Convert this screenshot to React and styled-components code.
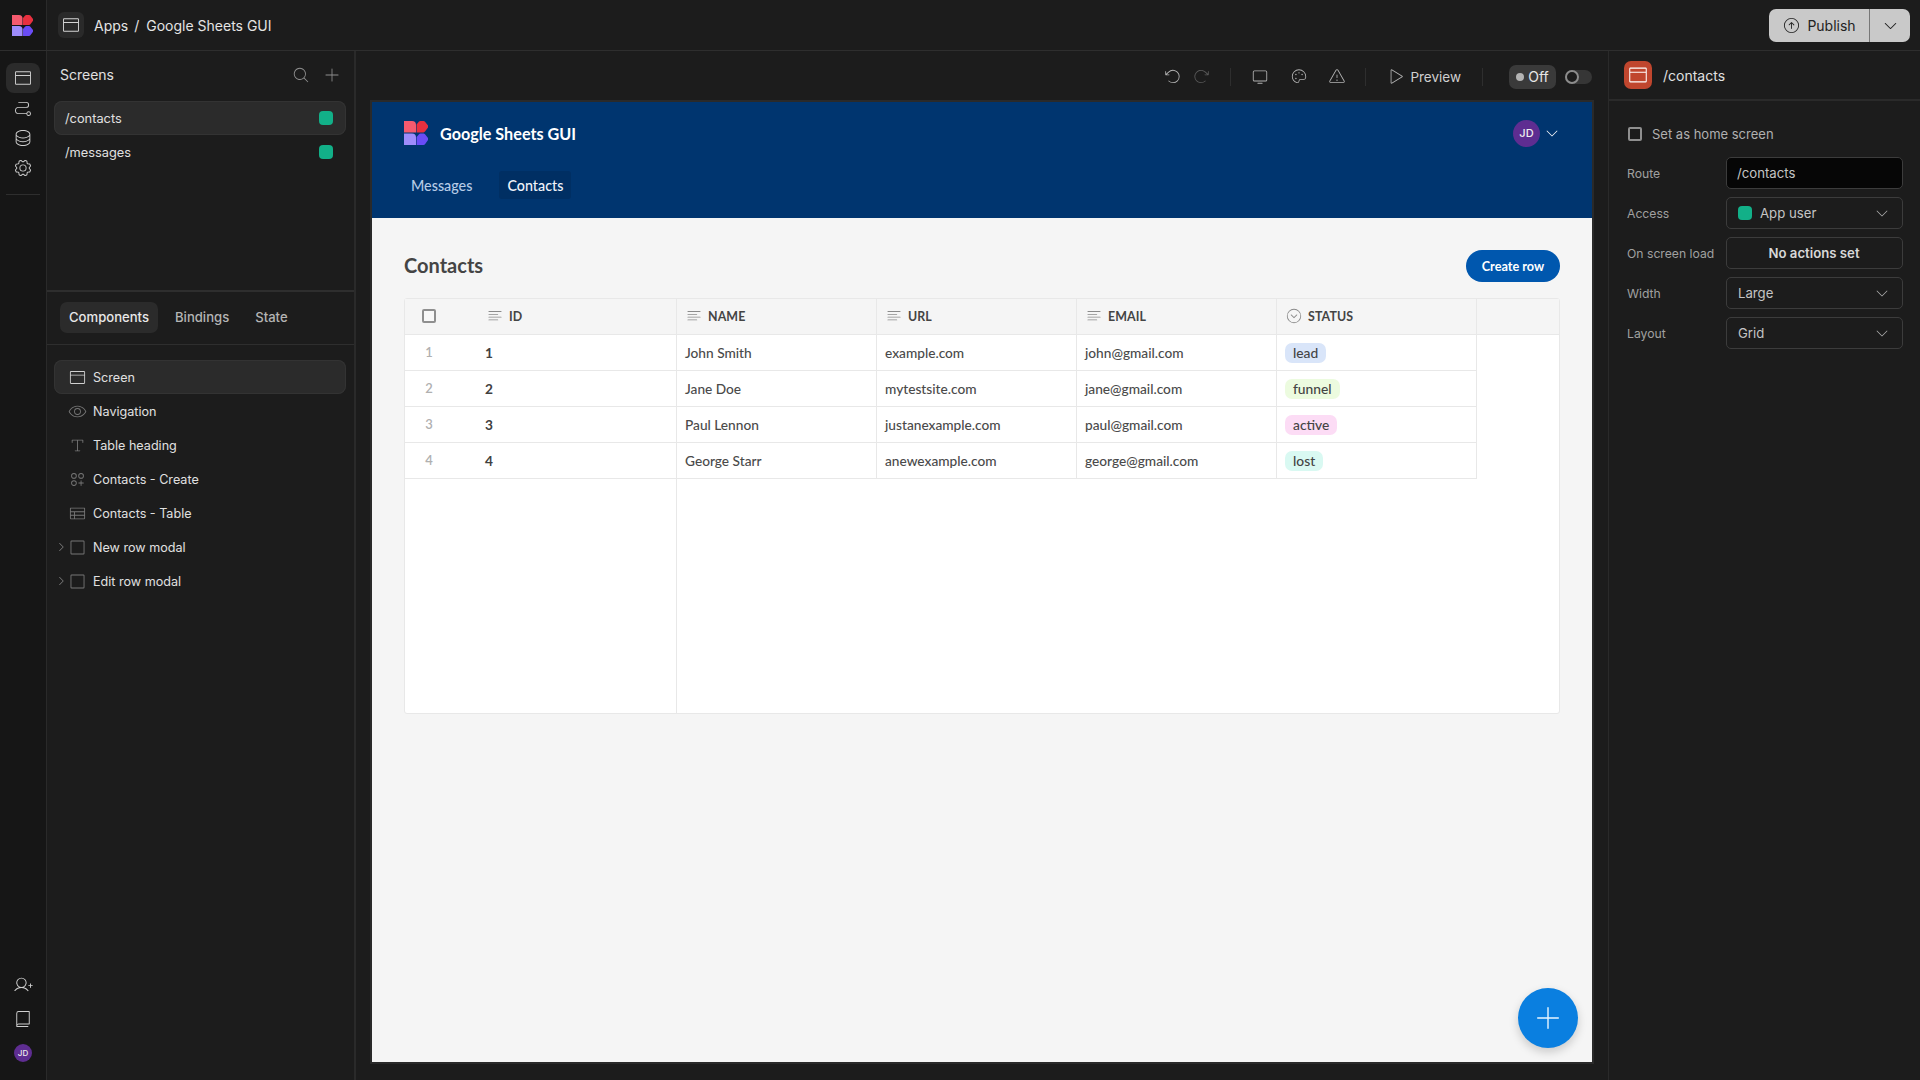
import React from "react";
import styled, { createGlobalStyle } from "styled-components";
import {
  PiBrowserLight,
  PiPathLight,
  PiDatabaseLight,
  PiGearLight,
  PiUserPlusLight,
  PiBookLight,
  PiMagnifyingGlassLight,
  PiPlusLight,
  PiEyeLight,
  PiTextTLight,
  PiCirclesThreePlusLight,
  PiTableLight,
  PiSquareLight,
  PiCaretRightLight,
  PiCaretDownLight,
  PiArrowCircleUpLight,
  PiArrowCounterClockwiseLight,
  PiArrowClockwiseLight,
  PiMonitorLight,
  PiPaletteLight,
  PiWarningLight,
  PiPlayLight,
  PiTextAlignLeftLight,
  PiCaretCircleDownLight,
} from "react-icons/pi";

const GlobalStyle = createGlobalStyle`
  html, body {
    margin: 0;
    padding: 0;
    background: #1c1c1c;
    font-family: "Inter", "Liberation Sans", sans-serif;
    -webkit-font-smoothing: antialiased;
  }
  * { box-sizing: border-box; }
`;

const Shell = styled.div`
  width: 1920px;
  height: 1080px;
  display: flex;
  flex-direction: column;
  overflow: hidden;
  background: #1c1c1c;
  color: #e0e0e0;
`;

const TopBar = styled.header`
  height: 51px;
  flex: none;
  display: flex;
  align-items: center;
  border-bottom: 1px solid #2e2e2e;
`;

const LogoCell = styled.div`
  width: 47px;
  height: 100%;
  flex: none;
  display: flex;
  align-items: center;
  padding-left: 12px;
  background: #161616;
  border-right: 1px solid #2a2a2a;
`;

const Crumbs = styled.div`
  flex: 1;
  display: flex;
  align-items: center;
  padding-left: 11px;
  font-size: 14px;
  color: #e4e4e4;
`;

const CrumbIcon = styled.div`
  width: 26px;
  height: 26px;
  margin-right: 10px;
  display: flex;
  align-items: center;
  justify-content: center;
  border-radius: 6px;
  background: #2a2a2a;
  color: #d4d4d4;
  font-size: 20px;
`;

const CrumbSep = styled.span`
  margin: 0 7px 0 6px;
`;

const PublishGroup = styled.div`
  display: flex;
  height: 33px;
  margin-right: 10px;
  border-radius: 7px;
  overflow: hidden;
  background: #c9c9c9;
  color: #222;
  font-size: 14px;
  font-weight: 400;
`;

const PublishButton = styled.div`
  width: 101px;
  display: flex;
  align-items: center;
  justify-content: center;
  gap: 6px;
  font-size: 14px;
  border-right: 1px solid #777;
  svg { font-size: 19px; }
`;

const PublishCaret = styled.div`
  width: 40px;
  display: flex;
  align-items: center;
  justify-content: center;
  font-size: 17px;
`;

const Main = styled.div`
  flex: 1;
  display: flex;
  min-height: 0;
`;

const Rail = styled.nav`
  width: 47px;
  flex: none;
  display: flex;
  flex-direction: column;
  align-items: center;
  padding: 12px 0 12px;
  background: #161616;
  border-right: 1px solid #2a2a2a;
`;

const RailButton = styled.div`
  width: 34px;
  height: 30px;
  display: flex;
  align-items: center;
  justify-content: center;
  border-radius: 8px;
  font-size: 20px;
  color: #cfcfcf;
  background: ${(p) => (p.$active ? "#2b2b2b" : "transparent")};
`;

const RailDivider = styled.div`
  width: 34px;
  height: 1px;
  margin-top: 11px;
  background: #2e2e2e;
`;

const RailBottom = styled.div`
  margin-top: auto;
  display: flex;
  flex-direction: column;
  align-items: center;
  gap: 4px;
`;

const Avatar = styled.div`
  width: ${(p) => p.$size}px;
  height: ${(p) => p.$size}px;
  flex: none;
  display: flex;
  align-items: center;
  justify-content: center;
  border-radius: 50%;
  background: #5e2d91;
  color: #eee;
  font-size: ${(p) => p.$font}px;
  font-weight: 500;
`;

const LeftPanel = styled.aside`
  width: 309px;
  flex: none;
  display: flex;
  flex-direction: column;
  border-right: 2px solid #2a2a2a;
`;

const ScreensSection = styled.section`
  height: 241px;
  flex: none;
  padding: 0 8px 0 7px;
  border-bottom: 2px solid #2e2e2e;
`;

const SectionHead = styled.div`
  height: 50px;
  display: flex;
  align-items: center;
  padding: 0 5px 3px 6px;
  font-size: 14px;
  color: #e0e0e0;
`;

const SectionTitle = styled.span`
  flex: 1;
`;

const HeadIcons = styled.div`
  display: flex;
  gap: 13px;
  font-size: 18px;
  color: #8e8e8e;
`;

const ListRow = styled.div`
  height: 34px;
  display: flex;
  align-items: center;
  padding: 0 13px 0 11px;
  border-radius: 8px;
  font-size: 12.8px;
  color: #e0e0e0;
  background: ${(p) => (p.$active ? "#2b2b2b" : "transparent")};
  box-shadow: ${(p) => (p.$active ? "inset 0 0 0 1px #333" : "none")};
`;

const RowLabel = styled.span`
  flex: 1;
`;

const GreenDot = styled.span`
  width: 14px;
  height: 14px;
  flex: none;
  border-radius: 4px;
  background: #12b088;
`;

const TabBar = styled.div`
  height: 53px;
  flex: none;
  display: flex;
  align-items: center;
  padding: 0 13px 2px;
  border-bottom: 1px solid #2e2e2e;
`;

const Tab = styled.div`
  height: 31px;
  margin-right: ${(p) => p.$gap || 0}px;
  display: flex;
  align-items: center;
  padding: 0 9px;
  border-radius: 7px;
  font-size: 13.1px;
  font-weight: 500;
  color: ${(p) => (p.$active ? "#e8e8e8" : "#b4b4b4")};
  background: ${(p) => (p.$active ? "#2b2b2b" : "transparent")};
`;

const Tree = styled.div`
  padding: 15px 8px 15px 7px;
`;

const TreeRow = styled.div`
  height: 34px;
  display: flex;
  align-items: center;
  padding-left: 1px;
  border-radius: 8px;
  font-size: 12.6px;
  color: #e0e0e0;
  background: ${(p) => (p.$active ? "#2b2b2b" : "transparent")};
  box-shadow: ${(p) => (p.$active ? "inset 0 0 0 1px #333" : "none")};
`;

const TreeCaret = styled.span`
  width: 12px;
  display: flex;
  font-size: 14px;
  color: #8a8a8a;
`;

const TreeIcon = styled.span`
  width: 20px;
  margin-right: 6px;
  display: flex;
  justify-content: center;
  font-size: 19px;
  color: ${(p) => (p.$bright ? "#d0d0d0" : "#777")};
`;

const Canvas = styled.main`
  flex: 1;
  min-width: 0;
  display: flex;
  flex-direction: column;
  padding: 0 16px 18px;
`;

const Toolbar = styled.div`
  height: 51px;
  flex: none;
  display: flex;
  align-items: center;
  justify-content: flex-end;
  color: #a8a8a8;
`;

const ToolIcon = styled.span`
  width: 18px;
  margin-left: ${(p) => p.$left || 0}px;
  display: flex;
  justify-content: center;
  font-size: 19px;
  color: ${(p) => (p.$dim ? "#5a5a5a" : "#b4b4b4")};
`;

const ToolSep = styled.span`
  width: 1px;
  height: 18px;
  margin-left: ${(p) => p.$left}px;
  background: #2e2e2e;
`;

const PreviewLabel = styled.span`
  margin-left: 6px;
  font-size: 13.5px;
  color: #cfcfcf;
`;

const OffPill = styled.div`
  width: 47px;
  height: 24px;
  margin-left: 26px;
  display: flex;
  align-items: center;
  justify-content: center;
  gap: 4px;
  border-radius: 7px;
  background: #3a3a3a;
  color: #e8e8e8;
  font-size: 14px;
`;

const OffDot = styled.span`
  width: 8px;
  height: 8px;
  border-radius: 50%;
  background: #b4b4b4;
`;

const Switch = styled.div`
  width: 27px;
  height: 14px;
  margin-left: 9px;
  display: flex;
  align-items: center;
  border-radius: 7px;
  background: #363636;
`;

const SwitchKnob = styled.span`
  width: 14px;
  height: 14px;
  border-radius: 50%;
  border: 2px solid #8c8c8c;
  background: #1c1c1c;
`;

const Screen = styled.div`
  flex: 1;
  position: relative;
  display: flex;
  flex-direction: column;
  background: #f5f5f5;
  box-shadow: 0 0 0 2px #2a2a2a;
`;

const AppHeader = styled.div`
  height: 116px;
  flex: none;
  padding: 19px 32px 0 32px;
  background: #00356f;
`;

const BrandRow = styled.div`
  height: 24px;
  display: flex;
  align-items: center;
  gap: 12px;
  color: #fff;
`;

const BrandName = styled.div`
  flex: 1;
  font-family: "Lato", sans-serif;
  font-size: 16.2px;
  font-weight: 700;
`;

const AppCaret = styled.span`
  display: flex;
  font-size: 16px;
  margin-left: -8px;
  color: #fff;
`;

const AppNav = styled.div`
  display: flex;
  gap: 19px;
  margin: 26px 0 0 -1px;
`;

const NavLink = styled.div`
  height: 28px;
  display: flex;
  align-items: center;
  padding: 0 8px;
  border-radius: 3px;
  font-family: "Lato", sans-serif;
  font-size: 14.3px;
  font-weight: 500;
  color: ${(p) => (p.$active ? "#f0f4fa" : "#b6cbe6")};
  background: ${(p) => (p.$active ? "#002f63" : "transparent")};
`;

const Body = styled.div`
  flex: 1;
  display: flex;
  flex-direction: column;
  padding: 32px 32px 0;
`;

const HeadingRow = styled.div`
  height: 32px;
  display: flex;
  align-items: center;
  justify-content: space-between;
`;

const Heading = styled.h1`
  margin: 0 0 2px;
  font-family: "Lato", sans-serif;
  font-size: 20px;
  font-weight: 700;
  color: #444;
`;

const CreateButton = styled.div`
  width: 94px;
  height: 32px;
  display: flex;
  align-items: center;
  justify-content: center;
  padding-bottom: 1px;
  border-radius: 16px;
  background: #0057ae;
  color: #fff;
  font-family: "Lato", sans-serif;
  font-size: 12.7px;
  font-weight: 700;
`;

const TableBox = styled.div`
  height: 416px;
  margin-top: 16px;
  display: flex;
  flex-direction: column;
  background: #fff;
  border: 1px solid #e8e8e8;
  border-radius: 3px;
  font-family: "Lato", sans-serif;
  font-size: 13.7px;
  color: #4a4a4a;
`;

const GridRow = styled.div`
  height: ${(p) => p.$height}px;
  flex: ${(p) => (p.$fill ? 1 : "none")};
  display: grid;
  grid-template-columns: 272px 200px 200px 200px 200px 1fr;
  background: ${(p) => (p.$head ? "#f5f5f5" : "transparent")};
`;

const Cell = styled.div`
  display: flex;
  align-items: center;
  padding: 0 0 1px ${(p) => p.$pad || 8}px;
  border-right: 1px solid #e8e8e8;
  border-bottom: ${(p) => (p.$fill ? "none" : "1px solid #e8e8e8")};
`;

const EndCell = styled.div`
  border-bottom: ${(p) => (p.$head ? "1px solid #e8e8e8" : "none")};
`;

const HeadCell = styled(Cell)`
  font-size: 12.4px;
  font-weight: 700;
  color: #444;
  letter-spacing: 0.1px;
`;

const HeadIcon = styled.span`
  display: flex;
  margin: 0 5px 0 ${(p) => p.$left || 0}px;
  font-size: 18px;
  color: #8a8a8a;
`;

const CheckBoxMark = styled.span`
  width: 14px;
  height: 14px;
  flex: none;
  border: 2px solid #8f8f8f;
  border-radius: 2px;
  background: ${(p) => p.$bg || "transparent"};
`;

const IdCols = styled.div`
  display: grid;
  grid-template-columns: 63px 1fr;
  align-items: center;
  width: 100%;
`;

const RowNum = styled.span`
  text-align: center;
  font-size: 13px;
  font-weight: 600;
  color: #b0b0b0;
  padding-right: 49px;
`;

const RowId = styled.span`
  font-weight: 700;
  color: #404040;
`;

const CellText = styled.span`
  font-weight: 500;
`;

const Pill = styled.span`
  height: 20px;
  display: inline-flex;
  align-items: center;
  margin-top: 1px;
  padding: 0 8px;
  border-radius: 7px;
  background: ${(p) => p.$bg};
  color: #444;
  font-size: 13.8px;
  font-weight: 500;
`;

const Fab = styled.div`
  position: absolute;
  right: 14px;
  bottom: 14px;
  width: 60px;
  height: 60px;
  display: flex;
  align-items: center;
  justify-content: center;
  border-radius: 50%;
  background: #0a7fe0;
  color: #e8f6ff;
  font-size: 30px;
  box-shadow: 0 4px 10px rgba(0, 0, 0, 0.18);
`;

const RightPanel = styled.aside`
  flex: none;
  width: 312px;
  display: flex;
  flex-direction: column;
  border-left: 1px solid #2a2a2a;
`;

const RightHead = styled.div`
  height: 50px;
  flex: none;
  display: flex;
  align-items: center;
  gap: 11px;
  padding-left: 15px;
  border-bottom: 2px solid #2a2a2a;
  font-size: 14px;
`;

const RedIcon = styled.div`
  width: 28px;
  height: 28px;
  display: flex;
  align-items: center;
  justify-content: center;
  border-radius: 7px;
  background: #c0462e;
  color: #fff;
  font-size: 22px;
`;

const Settings = styled.div`
  display: grid;
  grid-template-columns: 98px 177px;
  row-gap: 8px;
  align-items: center;
  padding: 24px 0 0 19px;
`;

const HomeRow = styled.div`
  grid-column: 1 / 3;
  height: 18px;
  margin-bottom: 6px;
  display: flex;
  align-items: center;
  gap: 10px;
  font-size: 13px;
  color: #b0b0b0;
`;

const FieldLabel = styled.div`
  margin-left: -1px;
  font-size: 12.2px;
  color: #a0a0a0;
`;

const Field = styled.div`
  height: 32px;
  display: flex;
  align-items: center;
  justify-content: ${(p) => (p.$center ? "center" : "flex-start")};
  gap: 8px;
  padding: 0 12px 0 ${(p) => (p.$dark ? 10 : 11)}px;
  border: 1px solid #3c3c3c;
  border-radius: 5px;
  font-size: 13.2px;
  font-weight: ${(p) => (p.$center ? 600 : 400)};
  color: ${(p) => (p.$center ? "#d8d8d8" : "#c4c4c4")};
  background: ${(p) => (p.$dark ? "#060606" : "transparent")};
`;

const FieldValue = styled.span`
  flex: 1;
`;

const FieldCaret = styled.span`
  display: flex;
  font-size: 16px;
  color: #b0b0b0;
`;

// the four-piece brand mark, same in the top bar and the app header
const Logo = ({ size }) => (
  <svg width={size} height={size} viewBox="0 0 24 24">
    <path d="M0 0h8a4 4 0 0 1 4 4v7.4H0z" fill="#f55a6e" />
    <path d="M12.6 3.5 L15 0.6 a2 2 0 0 1 1.5 -.6 h3 a2 2 0 0 1 1.5 .7 L24 4.5 a1.6 1.6 0 0 1 0 2 L21 10.6 a2 2 0 0 1 -1.5 .8 h-6.9z" fill="#e8303f" />
    <path d="M0 12.6h8a4 4 0 0 1 4 4V24H0z" fill="#9e8cfb" />
    <path d="M12.6 16 L15 13.2 a2 2 0 0 1 1.5 -.6 h3 a2 2 0 0 1 1.5 .7 L24 17 a1.6 1.6 0 0 1 0 2 L21 23.2 a2 2 0 0 1 -1.5 .8 h-6.9z" fill="#6a4cf6" />
  </svg>
);

const columns = ["NAME", "URL", "EMAIL"];

const rows = [
  { id: 1, name: "John Smith", url: "example.com", email: "john@gmail.com", status: "lead", bg: "#d9e5f9" },
  { id: 2, name: "Jane Doe", url: "mytestsite.com", email: "jane@gmail.com", status: "funnel", bg: "#ecfbdf" },
  { id: 3, name: "Paul Lennon", url: "justanexample.com", email: "paul@gmail.com", status: "active", bg: "#fcdcf5" },
  { id: 4, name: "George Starr", url: "anewexample.com", email: "george@gmail.com", status: "lost", bg: "#d9f9f2" },
];

const tree = [
  { label: "Screen", icon: <PiBrowserLight />, active: true, bright: true },
  { label: "Navigation", icon: <PiEyeLight /> },
  { label: "Table heading", icon: <PiTextTLight /> },
  { label: "Contacts - Create", icon: <PiCirclesThreePlusLight /> },
  { label: "Contacts - Table", icon: <PiTableLight /> },
  { label: "New row modal", icon: <PiSquareLight />, caret: true },
  { label: "Edit row modal", icon: <PiSquareLight />, caret: true },
];

const settings = [
  { label: "Access", value: "App user", dot: true },
  { label: "On screen load", value: "No actions set", center: true },
  { label: "Width", value: "Large" },
  { label: "Layout", value: "Grid" },
];

const App = () => {
  return (
    <Shell>
      <GlobalStyle />
      <TopBar>
        <LogoCell>
          <Logo size={21} />
        </LogoCell>
        <Crumbs>
          <CrumbIcon>
            <PiBrowserLight />
          </CrumbIcon>
          Apps<CrumbSep>/</CrumbSep>Google Sheets GUI
        </Crumbs>
        <PublishGroup>
          <PublishButton>
            <PiArrowCircleUpLight />
            Publish
          </PublishButton>
          <PublishCaret>
            <PiCaretDownLight />
          </PublishCaret>
        </PublishGroup>
      </TopBar>

      <Main>
        <Rail>
          <RailButton $active>
            <PiBrowserLight />
          </RailButton>
          <RailButton>
            <PiPathLight />
          </RailButton>
          <RailButton>
            <PiDatabaseLight />
          </RailButton>
          <RailButton>
            <PiGearLight />
          </RailButton>
          <RailDivider />
          <RailBottom>
            <RailButton>
              <PiUserPlusLight />
            </RailButton>
            <RailButton>
              <PiBookLight />
            </RailButton>
            <RailButton>
              <Avatar $size={18} $font={8}>
                JD
              </Avatar>
            </RailButton>
          </RailBottom>
        </Rail>

        <LeftPanel>
          <ScreensSection>
            <SectionHead>
              <SectionTitle>Screens</SectionTitle>
              <HeadIcons>
                <PiMagnifyingGlassLight />
                <PiPlusLight />
              </HeadIcons>
            </SectionHead>
            <ListRow $active>
              <RowLabel>/contacts</RowLabel>
              <GreenDot />
            </ListRow>
            <ListRow>
              <RowLabel>/messages</RowLabel>
              <GreenDot />
            </ListRow>
          </ScreensSection>
          <TabBar>
            <Tab $active $gap={8}>
              Components
            </Tab>
            <Tab $gap={8}>Bindings</Tab>
            <Tab>State</Tab>
          </TabBar>
          <Tree>
            {tree.map((item) => (
              <TreeRow key={item.label} $active={item.active}>
                <TreeCaret>{item.caret && <PiCaretRightLight />}</TreeCaret>
                <TreeIcon $bright={item.bright}>{item.icon}</TreeIcon>
                {item.label}
              </TreeRow>
            ))}
          </Tree>
        </LeftPanel>

        <Canvas>
          <Toolbar>
            <ToolIcon>
              <PiArrowCounterClockwiseLight />
            </ToolIcon>
            <ToolIcon $left={10} $dim>
              <PiArrowClockwiseLight />
            </ToolIcon>
            <ToolSep $left={20} />
            <ToolIcon $left={20}>
              <PiMonitorLight />
            </ToolIcon>
            <ToolIcon $left={21}>
              <PiPaletteLight />
            </ToolIcon>
            <ToolIcon $left={20}>
              <PiWarningLight />
            </ToolIcon>
            <ToolSep $left={19} />
            <ToolIcon $left={20}>
              <PiPlayLight />
            </ToolIcon>
            <PreviewLabel>Preview</PreviewLabel>
            <ToolSep $left={21} />
            <OffPill>
              <OffDot />
              Off
            </OffPill>
            <Switch>
              <SwitchKnob />
            </Switch>
          </Toolbar>

          <Screen>
            <AppHeader>
              <BrandRow>
                <Logo size={24} />
                <BrandName>Google Sheets GUI</BrandName>
                <Avatar $size={27} $font={11}>
                  JD
                </Avatar>
                <AppCaret>
                  <PiCaretDownLight />
                </AppCaret>
              </BrandRow>
              <AppNav>
                <NavLink>Messages</NavLink>
                <NavLink $active>Contacts</NavLink>
              </AppNav>
            </AppHeader>

            <Body>
              <HeadingRow>
                <Heading>Contacts</Heading>
                <CreateButton>Create row</CreateButton>
              </HeadingRow>
              <TableBox>
                <GridRow $head $height={36}>
                  <HeadCell $pad={17}>
                    <CheckBoxMark $bg="#f8f8f8" />
                    <HeadIcon $left={50}>
                      <PiTextAlignLeftLight />
                    </HeadIcon>
                    ID
                  </HeadCell>
                  {columns.map((c) => (
                    <HeadCell key={c}>
                      <HeadIcon>
                        <PiTextAlignLeftLight />
                      </HeadIcon>
                      {c}
                    </HeadCell>
                  ))}
                  <HeadCell>
                    <HeadIcon>
                      <PiCaretCircleDownLight />
                    </HeadIcon>
                    STATUS
                  </HeadCell>
                  <EndCell $head />
                </GridRow>
                {rows.map((r) => (
                  <GridRow key={r.id} $height={36}>
                    <Cell $pad={17}>
                      <IdCols>
                        <RowNum>{r.id}</RowNum>
                        <RowId>{r.id}</RowId>
                      </IdCols>
                    </Cell>
                    <Cell>
                      <CellText>{r.name}</CellText>
                    </Cell>
                    <Cell>
                      <CellText>{r.url}</CellText>
                    </Cell>
                    <Cell>
                      <CellText>{r.email}</CellText>
                    </Cell>
                    <Cell>
                      <Pill $bg={r.bg}>{r.status}</Pill>
                    </Cell>
                    <EndCell />
                  </GridRow>
                ))}
                <GridRow $fill>
                  <Cell $fill />
                </GridRow>
              </TableBox>
            </Body>

            <Fab>
              <PiPlusLight />
            </Fab>
          </Screen>
        </Canvas>

        <RightPanel>
          <RightHead>
            <RedIcon>
              <PiBrowserLight />
            </RedIcon>
            /contacts
          </RightHead>
          <Settings>
            <HomeRow>
              <CheckBoxMark />
              Set as home screen
            </HomeRow>
            <FieldLabel>Route</FieldLabel>
            <Field $dark>/contacts</Field>
            {settings.map((s) => (
              <React.Fragment key={s.label}>
                <FieldLabel>{s.label}</FieldLabel>
                <Field $center={s.center}>
                  {s.dot && <GreenDot />}
                  {s.center ? s.value : <FieldValue>{s.value}</FieldValue>}
                  {!s.center && (
                    <FieldCaret>
                      <PiCaretDownLight />
                    </FieldCaret>
                  )}
                </Field>
              </React.Fragment>
            ))}
          </Settings>
        </RightPanel>
      </Main>
    </Shell>
  );
};

export default App;
